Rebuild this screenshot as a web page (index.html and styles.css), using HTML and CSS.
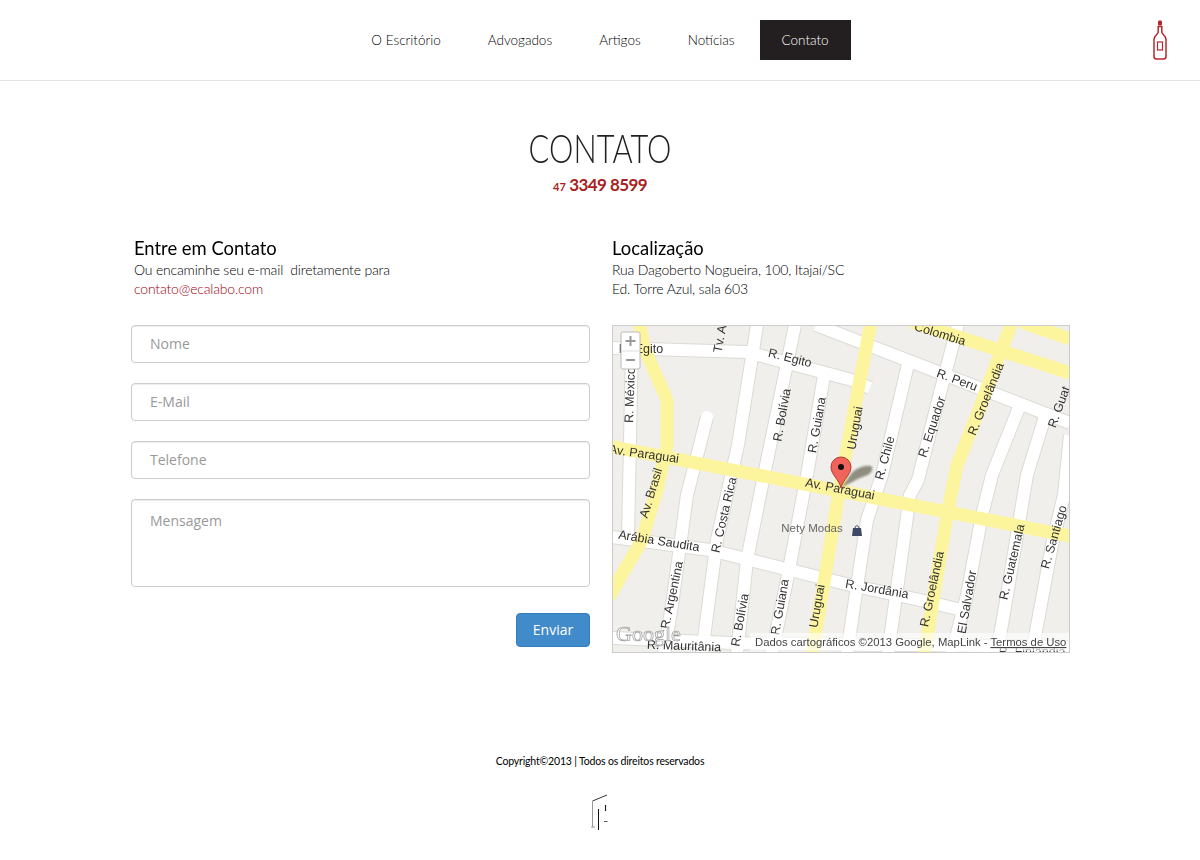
FILE: index.html
```html
<!DOCTYPE html>
<html lang="pt-BR">
	<head>
		<meta charset="utf-8">
		<title>Contato</title>
		<link rel="stylesheet" href="styles.css">
	</head>
	<body>

	<header class="topbar">
		<nav class="menu">
			<a href="#">O Escritório</a>
			<a href="#">Advogados</a>
			<a href="#">Artigos</a>
			<a href="#">Notícias</a>
			<a href="#" class="active">Contato</a>
		</nav>
		<a href="#" class="bottle">
			<svg width="14" height="40" viewBox="0 0 14 40">
				<rect x="5" y="0.5" width="4" height="5" rx="1.2" fill="#b5282e"/>
				<path d="M5.2 6.5h3.6v5.5c0 2.5 4.2 3.5 4.2 7.5v17c0 1.5-1 2.500-2.500 2.500h-7c-1.500 0-2.500-1-2.500-2.500v-17c0-4 4.200-5 4.200-7.500z" fill="none" stroke="#b5282e" stroke-width="1.500"/>
				<rect x="4.500" y="22" width="5" height="8" fill="none" stroke="#b5282e" stroke-width="1.200"/>
			</svg>
		</a>
	</header>

	<main class="page">
		<div class="title">
			<h1>CONTATO</h1>
			<p class="phone"><small>47</small> 3349 8599</p>
		</div>

		<div class="columns">
			<section class="col">
				<div class="intro intro-left">
					<h2>Entre em Contato</h2>
					<p>Ou encaminhe seu e-mail &nbsp;diretamente para<br><a href="#">contato@ecalabo.com</a></p>
				</div>
				<form class="form">
					<input type="text" placeholder="Nome">
					<input type="text" placeholder="E-Mail">
					<input type="text" placeholder="Telefone">
					<textarea placeholder="Mensagem"></textarea>
					<button type="button">Enviar</button>
				</form>
			</section>

			<section class="col">
				<div class="intro">
					<h2>Localização</h2>
					<p>Rua Dagoberto Nogueira, 100, Itajaí/SC<br>Ed. Torre Azul, sala 603</p>
				</div>
				<div class="map">
					<svg width="456" height="326" viewBox="1 1 456 326">
						<rect width="458" height="328" fill="#f1efeb"/>

						<g class="edge">
							<polyline points="204,0 458,98"/>
							<polyline points="0,23 135,27 240,55 258,63"/>
							<polyline points="0,212 98,225 238,260 308,275 350,285"/>
							<polyline points="0,313 120,318 458,322"/>
							<polyline points="20,20 16,212"/>
							<polyline points="95,92 75,170 60,280 52,328"/>
							<polyline points="145,0 126,120 105,215 90,328"/>
							<polyline points="183,0 150,160 135,235 125,328"/>
							<polyline points="213,45 195,150 175,255 160,328"/>
							<polyline points="297,35 270,150 255,195 235,328"/>
							<polyline points="346,0 328,68 306,155 298,170 280,300 276,328"/>
							<polyline points="408,80 380,150 370,190 355,270 340,328"/>
							<polyline points="435,85 415,150 395,270 385,328"/>
							<polyline points="458,110 452,170 440,220 420,328"/>
						</g>
						<g class="street">
							<polyline points="204,0 458,98"/>
							<polyline points="0,23 135,27 240,55 258,63"/>
							<polyline points="0,212 98,225 238,260 308,275 350,285"/>
							<polyline points="0,313 120,318 458,322"/>
							<polyline points="20,20 16,212"/>
							<polyline class="capped" points="95,92 75,170 60,280 52,328"/>
							<polyline points="145,0 126,120 105,215 90,328"/>
							<polyline points="183,0 150,160 135,235 125,328"/>
							<polyline points="213,45 195,150 175,255 160,328"/>
							<polyline points="297,35 270,150 255,195 235,328"/>
							<polyline points="346,0 328,68 306,155 298,170 280,300 276,328"/>
							<polyline points="408,80 380,150 370,190 355,270 340,328"/>
							<polyline points="435,85 415,150 395,270 385,328"/>
							<polyline points="458,110 452,170 440,220 420,328"/>
						</g>
						<g class="avenue">
							<polyline points="300,-3 458,48"/>
							<polyline points="410,-3 458,14"/>
							<polyline points="27,-3 33,25 55,75 55,121 45,165 30,215 -3,272"/>
							<polyline points="259,-3 228,160 200,330"/>
							<polyline points="400,-3 363,95 345,140 335,190 312,330"/>
							<polyline points="-3,121 458,211"/>
						</g>

						<g class="label">
							<text transform="translate(29,24)">R. Egito</text>
							<text transform="translate(108,14) rotate(-80)">Tv. A</text>
							<text transform="translate(178,33) rotate(14)">R. Egito</text>
							<text transform="translate(18,70) rotate(-88)">R. México</text>
							<text transform="translate(170,90) rotate(-80)">R. Bolívia</text>
							<text transform="translate(205,100) rotate(-80)">R. Guiana</text>
							<text transform="translate(243,103) rotate(-80)">Uruguai</text>
							<text transform="translate(273,133) rotate(-75)">R. Chile</text>
							<text transform="translate(320,102) rotate(-72)">R. Equador</text>
							<text transform="translate(345,55) rotate(20)">R. Peru</text>
							<text transform="translate(374,74) rotate(-68)">R. Groelândia</text>
							<text transform="translate(328,9) rotate(17)">Colombia</text>
							<text transform="translate(447,82) rotate(-70)">R. Guat</text>
							<text transform="translate(32,129) rotate(8)">Av. Paraguai</text>
							<text transform="translate(228,164) rotate(11)">Av. Paraguai</text>
							<text transform="translate(39,168) rotate(-73)">Av. Brasil</text>
							<text transform="translate(47,216) rotate(9)">Arábia Saudita</text>
							<text transform="translate(112,190) rotate(-77)">R. Costa Rica</text>
							<text transform="translate(60,270) rotate(-78)">R. Argentina</text>
							<text transform="translate(128,295) rotate(-80)">R. Bolívia</text>
							<text transform="translate(168,282) rotate(-80)">R. Guiana</text>
							<text transform="translate(205,281) rotate(-80)">Uruguai</text>
							<text transform="translate(265,264) rotate(10)">R. Jordânia</text>
							<text transform="translate(320,264) rotate(-78)">R. Groelândia</text>
							<text transform="translate(355,277) rotate(-80)">El Salvador</text>
							<text transform="translate(400,237) rotate(-77)">R. Guatemala</text>
							<text transform="translate(442,212) rotate(-74)">R. Santiago</text>
							<text transform="translate(72,321) rotate(2)">R. Mauritânia</text>
							<text transform="translate(420,327)">R. Finlândia</text>
						</g>
						<text class="poi" x="200" y="207">Nety Modas</text>
						<path d="M241 203h8l1 8h-10z" fill="#3d4766"/>
						<path d="M243 203c0-3 4-3 4 0" fill="none" stroke="#3d4766"/>

						<path class="shadow" d="M229 163l10-14c5-6 13-9 20-8c3 2 1 8-6 10c-9 3-16 8-24 12z"/>
						<path d="M229 163c-2-9-10-13-10-21a10 10 0 0 1 20 0c0 8-8 12-10 21z" fill="#f0645c" stroke="#b03a34"/>
						<circle cx="229" cy="142" r="3" fill="#111"/>

						<rect class="strip" x="138" y="308" width="320" height="18"/>
						<text class="attrib" x="143" y="321">Dados cartográficos ©2013 Google, MapLink - <tspan text-decoration="underline">Termos de Uso</tspan></text>
						<text class="google" x="4" y="316">Google</text>

						<g class="zoombox">
							<rect x="9" y="7" width="19" height="37" rx="2"/>
							<line x1="9" y1="26" x2="28" y2="26"/>
							<path class="glyph" d="M18.500 11v10M13.500 16h10M14 35h9"/>
						</g>
					</svg>
				</div>
			</section>
		</div>
	</main>

	<footer class="footer">
		<p>Copyright©2013 | Todos os direitos reservados</p>
		<svg width="18" height="38" viewBox="0 0 18 38">
			<path d="M1.500 7L16 1" stroke="#333" fill="none"/>
			<path d="M1.500 7v26M0 33h4" stroke="#999" fill="none"/>
			<path d="M7.500 15v21" stroke="#111" fill="none"/>
			<path d="M14.500 11v6" stroke="#222" stroke-width="1.200" fill="none"/>
			<path d="M13 27.500h3.500" stroke="#555" fill="none"/>
		</svg>
	</footer>

	</body>
</html>
```

FILE: styles.css
```css
body {
	background-color: #fff;
	color: #000;
	font: 300 14px Lato, "Open Sans", sans-serif;
	letter-spacing: -0.18px;
	margin: 0;
}
a { color: #a00010; text-decoration: none; }

.topbar {
	border-bottom: 1px solid #e3e3e3;
	display: grid;
	grid-template-columns: 1fr auto 1fr;
	grid-template-areas: ". menu bottle";
	height: 80px;
	align-items: center;
}
.menu {
	display: flex;
	grid-area: menu;
	gap: 3px;
}
.menu a {
	color: #000;
	font-size: 13.500px;
	height: 40px;
	letter-spacing: 0;
	line-height: 40px;
	padding: 0 22px;
}
.menu a.active {
	background-color: #231f20;
	color: #fff;
}
.bottle {
	grid-area: bottle;
	justify-self: end;
	height: 40px;
	margin-right: 33px;
}

.page {
	margin: 0 auto;
	width: 940px;
}
.title {
	padding-top: 44px;
	text-align: center;
}
h1 {
	color: #231f20;
	font-size: 40px;
	font-weight: 300;
	letter-spacing: 0;
	line-height: 46px;
	margin: 0;
	transform: scaleX(0.77);
}
.phone {
	color: #a81f24;
	font-size: 17px;
	font-weight: 700;
	letter-spacing: -0.6px;
	line-height: 20px;
	margin: 4px 0 0;
}
.phone small { font-size: 11px; letter-spacing: 0; }

.columns {
	display: grid;
	grid-template-columns: 459px 458px;
	gap: 22px;
	margin: 37px 0 0 1px;
}
.intro { height: 91px; }
.intro-left { padding-left: 3px; }
h2 {
	font-size: 20px;
	font-weight: 400;
	letter-spacing: 0;
	line-height: 26px;
	margin: 0;
	transform: scaleX(0.92);
	transform-origin: left;
}
.intro p {
	line-height: 19px;
	margin: 0;
}

.form {
	display: flex;
	flex-direction: column;
	gap: 20px;
}
.form input, .form textarea {
	background: #fff;
	border: 1px solid #ccc;
	border-radius: 4px;
	box-shadow: inset 0 1px 1px rgba(0,0,0,0.075);
	box-sizing: border-box;
	color: #555;
	font: 14px "Open Sans", sans-serif;
	letter-spacing: 0;
	padding: 0 18px 2px;
	width: 100%;
}
.form input { height: 38px; }
.form textarea {
	height: 88px;
	padding-top: 11px;
	resize: none;
}
.form ::placeholder { color: #999; opacity: 1; }
.form button {
	align-self: flex-end;
	background-color: #428bca;
	border: 1px solid #357ebd;
	border-radius: 4px;
	color: #fff;
	font: 14px "Open Sans", sans-serif;
	height: 34px;
	letter-spacing: 0;
	margin-top: 6px;
	padding-bottom: 3px;
	width: 74px;
}

.map {
	border: 1px solid #ccc;
	height: 326px;
	overflow: hidden;
	width: 456px;
}
.map svg {
	display: block;
	filter: blur(0.35px);
}
.edge polyline, .street polyline, .avenue polyline {
	fill: none;
	stroke-linejoin: round;
}
.edge polyline { stroke: #dcdad5; stroke-width: 14; }
.street polyline { stroke: #fff; stroke-width: 12; }
.street .capped { stroke-linecap: round; }
.avenue polyline { stroke: #fdf49e; stroke-width: 13; }
.label text {
	dominant-baseline: central;
	fill: #333;
	font: 12.500px "Liberation Sans", sans-serif;
	letter-spacing: 0;
	text-anchor: middle;
}
.poi {
	fill: #666;
	font: 11.500px "Liberation Sans", sans-serif;
	letter-spacing: 0;
	text-anchor: middle;
}
.shadow { fill: #5c5a48; filter: blur(1px); opacity: 0.65; }
.strip { fill: #fff; opacity: 0.6; }
.attrib {
	fill: #444;
	font: 11.300px "Liberation Sans", sans-serif;
	letter-spacing: 0;
}
.google {
	fill: #fff;
	font: 22px "Liberation Serif", serif;
	letter-spacing: 0;
	stroke: #999;
	stroke-width: 0.700;
}
.zoombox rect {
	fill: #fff;
	stroke: #bbb;
}
.zoombox line { stroke: #ddd; }
.zoombox .glyph {
	fill: none;
	stroke: #999;
	stroke-width: 2;
}

.footer {
	display: flex;
	flex-direction: column;
	align-items: center;
	padding-top: 101px;
}
.footer p {
	font-size: 10.500px;
	font-weight: 400;
	letter-spacing: -0.17px;
	line-height: 14px;
	margin: 0 0 26px;
}
```
